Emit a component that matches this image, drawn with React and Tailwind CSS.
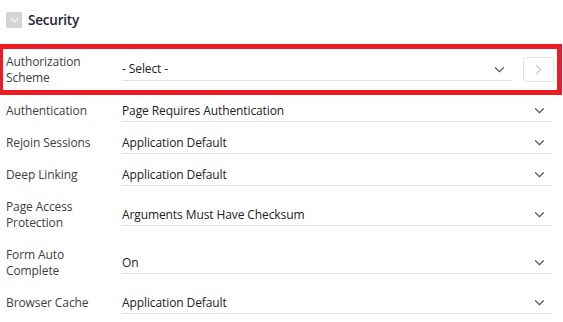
import React from 'react'

const rows = [
  { label: ['Authentication'], value: 'Page Requires Authentication', tall: false },
  { label: ['Rejoin Sessions'], value: 'Application Default', tall: false },
  { label: ['Deep Linking'], value: 'Application Default', tall: false },
  { label: ['Page Access', 'Protection'], value: 'Arguments Must Have Checksum', tall: true },
  { label: ['Form Auto', 'Complete'], value: 'On', tall: true },
  { label: ['Browser Cache'], value: 'Application Default', tall: false },
]

function ChevronDown({ className }) {
  return (
    <svg viewBox="0 0 12 8" className={className} fill="none" stroke="currentColor" strokeWidth="1.4">
      <path d="M1 1.5 L6 6.5 L11 1.5" />
    </svg>
  )
}

function Label({ lines, className = '' }) {
  return (
    <div className={`text-[12px] leading-[16px] tracking-[-0.1px] text-[#404040] ${className}`}>
      {lines.map((l) => (
        <div key={l}>{l}</div>
      ))}
    </div>
  )
}

function SelectField({ value, className = '' }) {
  return (
    <div className={`flex h-[22px] items-center justify-between border-b border-[#e2e2e2] ${className}`}>
      <span className="text-[12px] leading-[16px] tracking-[-0.1px] text-[#222]">{value}</span>
      <ChevronDown className="mr-[6px] h-[7px] w-[11px] text-[#4a4a4a]" />
    </div>
  )
}

export default function App() {
  return (
    <div
      className="h-[322px] w-[563px] overflow-hidden bg-white"
      style={{ fontFamily: '"Open Sans", "Noto Sans", sans-serif' }}
    >
      {/* Region header */}
      <div className="flex h-[44px] items-center gap-[6px] pl-[6px] pb-[4px]">
        <div className="flex h-[16px] w-[16px] items-center justify-center rounded-[2px] bg-[#d4d4d4]">
          <ChevronDown className="h-[6px] w-[9px] text-white" />
        </div>
        <span className="text-[13.5px] font-semibold tracking-[-0.2px] text-[#1f2433]">Security</span>
      </div>

      {/* Highlighted row */}
      <div className="ml-[-2px] flex h-[51px] w-[564px] items-center border-[5px] border-[#ed1c24]">
        <Label lines={['Authorization', 'Scheme']} className="w-[119px] pl-[3px]" />
        <SelectField value="- Select -" className="flex-1" />
        <button className="ml-[12px] mr-[3px] flex h-[25px] w-[31px] items-center justify-center rounded-[3px] border border-[#e4e4e4]">
          <svg viewBox="0 0 8 12" className="h-[11px] w-[7px] text-[#c4c4c4]" fill="none" stroke="currentColor" strokeWidth="1.3">
            <path d="M1.5 1 L6.5 6 L1.5 11" />
          </svg>
        </button>
      </div>

      {/* Remaining rows */}
      {rows.map((row) => (
        <div key={row.value + row.label[0]} className={`flex items-center ${row.tall ? 'h-[48px]' : 'h-[32px]'}`}>
          <Label lines={row.label} className="w-[122px] pl-[6px] pr-[10px]" />
          <SelectField value={row.value} className="mr-[12px] flex-1" />
        </div>
      ))}
    </div>
  )
}
